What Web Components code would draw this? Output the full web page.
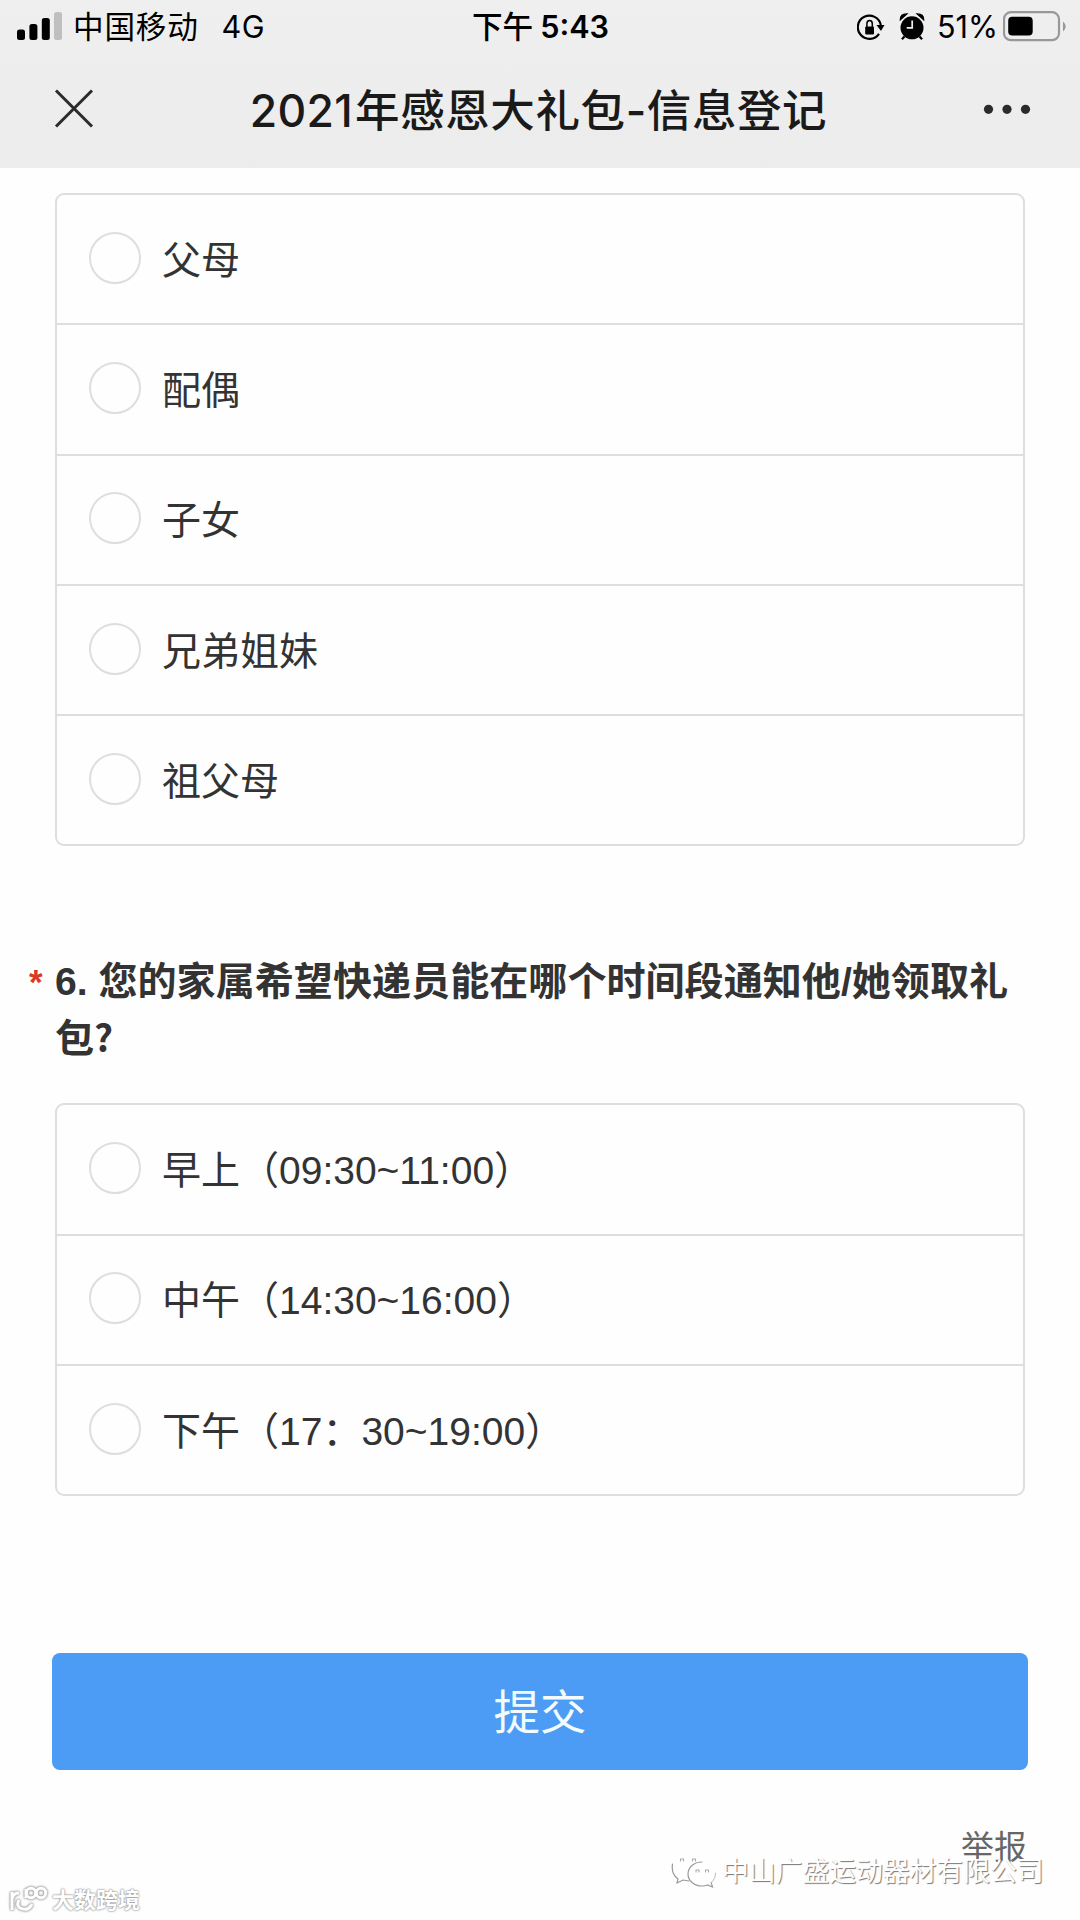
<!DOCTYPE html>
<html lang="zh-CN">
<head>
<meta charset="UTF-8">
<meta name="viewport" content="width=device-width, initial-scale=1.0">
<title>2021年感恩大礼包-信息登记</title>
<style>
    html, body {
        margin: 0;
        background: #fefefe;
    }
    body {
        width: 1080px;
        height: 1920px;
        overflow: hidden;
        font-family: "Liberation Sans", "Noto Sans CJK SC", sans-serif;
        color: #333;
    }
    .mark {
        font-family: "Noto Sans CJK SC", sans-serif;
        font-size: 37px;
        line-height: 1;
    }
</style>
</head>
<body>
<survey-page>
    <status-bar slot="top" carrier="中国移动" network="4G" period="下午" time="5:43" battery="51%"></status-bar>
    <nav-bar slot="top"><span slot="year">2021</span>年感恩大礼包-信息登记</nav-bar>

    <option-list>
        <option-item>父母</option-item>
        <option-item>配偶</option-item>
        <option-item>子女</option-item>
        <option-item>兄弟姐妹</option-item>
        <option-item>祖父母</option-item>
    </option-list>

    <question-title>6. 您的家属希望快递员能在哪个时间段通知他/她领取礼包<span class="mark">?</span></question-title>

    <option-list>
        <option-item>早上（09:30~11:00）</option-item>
        <option-item>中午（14:30~16:00）</option-item>
        <option-item>下午（17：30~19:00）</option-item>
    </option-list>

    <submit-button>提交</submit-button>
    <report-link>举报</report-link>

    <account-mark slot="overlay">中山广盛运动器材有限公司</account-mark>
    <source-mark slot="overlay">大数跨境</source-mark>
</survey-page>

<script>
class SurveyPage extends HTMLElement {
    constructor() {
        super();
        this.attachShadow({ mode: 'open' });
    }

    connectedCallback() {
        this.shadowRoot.innerHTML = `
            <style>
                :host {
                    display: block;
                    position: relative;
                    height: 1920px;
                }
                header {
                    height: 168px;
                    background: linear-gradient(#efefef, #ececec);
                }
                main {
                    display: flex;
                    flex-direction: column;
                    padding: 25px 55px 0;
                }
            </style>
            <header><slot name="top"></slot></header>
            <main><slot></slot></main>
            <slot name="overlay"></slot>
        `;
    }
}

class StatusBar extends HTMLElement {
    constructor() {
        super();
        this.attachShadow({ mode: 'open' });
    }

    connectedCallback() {
        const get = (name) => this.getAttribute(name);
        this.shadowRoot.innerHTML = `
            <style>
                :host {
                    display: grid;
                    grid-template-columns: 1fr auto 1fr;
                    align-items: center;
                    height: 54px;
                    padding: 0 13px 0 17px;
                    box-sizing: border-box;
                    font: 30.6px/54px Inter, "Noto Sans CJK SC", sans-serif;
                    color: #000;
                }
                div {
                    display: flex;
                    align-items: center;
                    white-space: nowrap;
                }
                svg {
                    display: block;
                    flex: none;
                }
                .carrier {
                    margin-left: 11px;
                    letter-spacing: .8px;
                }
                .network {
                    margin-left: 23px;
                    letter-spacing: .3px;
                }
                .clock {
                    margin-right: 3px;
                    font-weight: 600;
                }
                .period {
                    margin-right: 7px;
                    font-weight: 500;
                }
                .right {
                    justify-content: flex-end;
                }
                .alarm {
                    margin-left: 14px;
                }
                .battery {
                    margin: 0 5px 0 12px;
                    letter-spacing: 0;
                }
            </style>
            <div>
                <svg width="45" height="54" viewBox="0 0 45 54">
                    <rect x="0" y="29.500" width="8" height="10.500" rx="2.500"/>
                    <rect x="12.400" y="24" width="8" height="16" rx="2.500"/>
                    <rect x="24.800" y="18" width="8" height="22" rx="2.500"/>
                    <rect x="37" y="12" width="8" height="28" rx="2.500" fill="#bfbfbf"/>
                </svg>
                <span class="carrier">${get('carrier')}</span>
                <span class="network">${get('network')}</span>
            </div>
            <div class="clock">
                <span class="period">${get('period')}</span>
                <span>${get('time')}</span>
            </div>
            <div class="right">
                <svg width="28" height="30" viewBox="0 0 28 30">
                    <path d="M22 21.800A11.600 11.600 0 1 1 23.800 13" fill="none" stroke="#000" stroke-width="2.200"/>
                    <path d="M19.500 13h8l-3.500 6z"/>
                    <rect x="8.200" y="14.500" width="8.800" height="8" rx="1"/>
                    <path d="M9.900 15v-3.200a2.700 3.300 0 0 1 5.400 0V15" fill="none" stroke="#000" stroke-width="1.500"/>
                </svg>
                <svg class="alarm" width="26" height="30" viewBox="0 0 26 30">
                    <circle cx="13" cy="15.800" r="11.500"/>
                    <path d="M1.500 7.500Q1.500 2 7.500 2l-6 5.500zM24.500 7.500Q24.500 2 18.500 2l6 5.500z" stroke="#000" stroke-width="1.600"/>
                    <path d="M5.500 24.500l-2.600 2.800M20.500 24.500l2.600 2.800" stroke="#000" stroke-width="2.200"/>
                    <path d="M13.200 8.500v7.300H7.700" fill="none" stroke="#eee" stroke-width="1.700"/>
                </svg>
                <span class="battery">${get('battery')}</span>
                <svg width="64" height="54" viewBox="0 0 64 54">
                    <rect x="1" y="12.200" width="55" height="28" rx="7" fill="none" stroke="#989898" stroke-width="2.200"/>
                    <rect x="5.200" y="16.800" width="24.500" height="18.700" rx="4"/>
                    <path d="M60 21.500q5.500 5 0 10z" fill="#989898"/>
                </svg>
            </div>
        `;
    }
}

class NavBar extends HTMLElement {
    constructor() {
        super();
        this.attachShadow({ mode: 'open' });
    }

    connectedCallback() {
        this.shadowRoot.innerHTML = `
            <style>
                :host {
                    display: flex;
                    align-items: center;
                    justify-content: space-between;
                    height: 110px;
                    padding: 0 49px 0 54px;
                    color: #1a1a1a;
                }
                h1 {
                    margin: 3px 0 0;
                    font: 500 44.500px/110px Inter, "Noto Sans CJK SC", sans-serif;
                    letter-spacing: .6px;
                    white-space: nowrap;
                }
                ::slotted([slot="year"]) {
                    margin-right: 2px;
                    letter-spacing: .3px;
                }
                svg {
                    display: block;
                }
            </style>
            <svg width="40" height="40" viewBox="0 0 40 40">
                <path d="M2 1.500l36 36M38 1.500l-36 36" stroke="#2b2b2b" stroke-width="3"/>
            </svg>
            <h1><slot name="year"></slot><slot></slot></h1>
            <svg width="48" height="12" viewBox="0 0 48 12" fill="#2b2b2b">
                <circle cx="5.500" cy="6.300" r="4.600"/>
                <circle cx="24" cy="6.300" r="4.600"/>
                <circle cx="42.500" cy="6.300" r="4.600"/>
            </svg>
        `;
    }
}

class OptionList extends HTMLElement {
    constructor() {
        super();
        this.attachShadow({ mode: 'open' });
    }

    connectedCallback() {
        this.shadowRoot.innerHTML = `
            <style>
                :host {
                    display: block;
                    border: 2px solid #dedede;
                    border-radius: 9px;
                }
                ::slotted(:not(:first-child)) {
                    border-top: 2px solid #dedede;
                }
            </style>
            <slot></slot>
        `;
    }
}

class OptionItem extends HTMLElement {
    constructor() {
        super();
        this.attachShadow({ mode: 'open' });
    }

    connectedCallback() {
        this.shadowRoot.innerHTML = `
            <style>
                :host {
                    display: flex;
                    align-items: center;
                    height: 128.300px;
                    padding-left: 32px;
                    font-size: 39px;
                }
                i {
                    width: 48px;
                    height: 48px;
                    margin: -3px 21px 0 0;
                    border: 2px solid #dedede;
                    border-radius: 50%;
                }
                span {
                    margin-top: -5px;
                    white-space: nowrap;
                }
            </style>
            <i></i><span><slot></slot></span>
        `;
    }
}

class QuestionTitle extends HTMLElement {
    constructor() {
        super();
        this.attachShadow({ mode: 'open' });
    }

    connectedCallback() {
        this.shadowRoot.innerHTML = `
            <style>
                :host {
                    display: block;
                    position: relative;
                    margin: 107px 0 36px;
                    font-size: 39.100px;
                    font-weight: 600;
                    line-height: 57px;
                }
                b {
                    position: absolute;
                    left: -26px;
                    top: 0;
                    font-size: 35px;
                    color: #d93a26;
                }
            </style>
            <b>*</b><slot></slot>
        `;
    }
}

class SubmitButton extends HTMLElement {
    constructor() {
        super();
        this.attachShadow({ mode: 'open' });
    }

    connectedCallback() {
        this.shadowRoot.innerHTML = `
            <style>
                :host {
                    display: block;
                    margin: 157px -3px 0;
                }
                button {
                    display: block;
                    width: 100%;
                    height: 117px;
                    padding: 0 0 7px;
                    border: 0;
                    border-radius: 8px;
                    background: #4c9bf4;
                    color: #f2fcff;
                    font: inherit;
                    font-size: 46.500px;
                }
            </style>
            <button><slot></slot></button>
        `;
    }
}

class ReportLink extends HTMLElement {
    constructor() {
        super();
        this.attachShadow({ mode: 'open' });
    }

    connectedCallback() {
        this.shadowRoot.innerHTML = `
            <style>
                :host {
                    display: block;
                    align-self: flex-end;
                    margin-top: 53px;
                    margin-right: -2px;
                    font-size: 33px;
                    line-height: 50px;
                    color: #666;
                }
            </style>
            <slot></slot>
        `;
    }
}

class AccountMark extends HTMLElement {
    constructor() {
        super();
        this.attachShadow({ mode: 'open' });
    }

    connectedCallback() {
        this.shadowRoot.innerHTML = `
            <style>
                :host {
                    position: absolute;
                    left: 671px;
                    top: 1852px;
                    display: flex;
                    align-items: center;
                    gap: 5px;
                    height: 40px;
                    font-size: 26.800px;
                    line-height: 40px;
                    color: #fff;
                    text-shadow: 1px 1px 1px #777;
                    white-space: nowrap;
                }
            </style>
            <svg width="46" height="38" viewBox="0 0 46 38" fill="#fff" stroke-linecap="round">
                <path d="M18 3C8 3 1 9 1 16.500c0 4 2 7.500 6 10L6 30l6-3c2 .700 4 1 6 1 9 0 16-5.500 16-12.500S26 3 18 3z"/>
                <path d="M1.500 11Q0 21 7 26l-1 4 6-3 6 1" fill="none" stroke="#999" stroke-width="1.200"/>
                <path d="M31 9c-8 0-14 5.300-14 12s6 12 14 12c2 0 4-.400 5.500-1l5 3-1.300-4.400C43.300 28.300 45 25 45 21c0-6.700-6-12-14-12z"/>
                <path d="M31 9c-8 0-14 5.300-14 12s6 12 14 12c2 0 4-.400 5.500-1l5 2-1.300-4.400" fill="none" stroke="#999" stroke-width="1.200"/>
                <path d="M40.200 29.600Q44.500 26 44.500 20" fill="none" stroke="#bbb"/>
                <path d="M9.500 8v-2h3v2M21.500 8v-2h3v2M25 19v-2h3v2M34.500 19v-2h3v2" fill="none" stroke="#aaa" stroke-width="1.100" stroke-linejoin="round"/>
            </svg>
            <span><slot></slot></span>
        `;
    }
}

class SourceMark extends HTMLElement {
    constructor() {
        super();
        this.attachShadow({ mode: 'open' });
    }

    connectedCallback() {
        this.shadowRoot.innerHTML = `
            <style>
                :host {
                    position: absolute;
                    left: 8px;
                    top: 1884px;
                    display: flex;
                    align-items: center;
                    gap: 2px;
                    height: 34px;
                    font-size: 22px;
                    font-weight: 700;
                    line-height: 32px;
                    color: #fff;
                    text-shadow: 0 0 2px #888, 0 0 2px #999;
                    white-space: nowrap;
                }
                svg {
                    filter: drop-shadow(0 0 1px #888) drop-shadow(0 0 1px #bbb);
                }
            </style>
            <svg width="42" height="34" viewBox="0 0 42 34" fill="none" stroke="#fff" stroke-width="3">
                <path d="M4 8v18M4 15q1-6 7-6M11 16q-3 5 1 8 8 4 12-4"/>
                <path d="M18 14V5"/>
                <circle cx="23" cy="9" r="4.700"/>
                <circle cx="33" cy="9" r="4.700"/>
            </svg>
            <span><slot></slot></span>
        `;
    }
}

customElements.define('survey-page', SurveyPage);
customElements.define('status-bar', StatusBar);
customElements.define('nav-bar', NavBar);
customElements.define('option-list', OptionList);
customElements.define('option-item', OptionItem);
customElements.define('question-title', QuestionTitle);
customElements.define('submit-button', SubmitButton);
customElements.define('report-link', ReportLink);
customElements.define('account-mark', AccountMark);
customElements.define('source-mark', SourceMark);
</script>
</body>
</html>
